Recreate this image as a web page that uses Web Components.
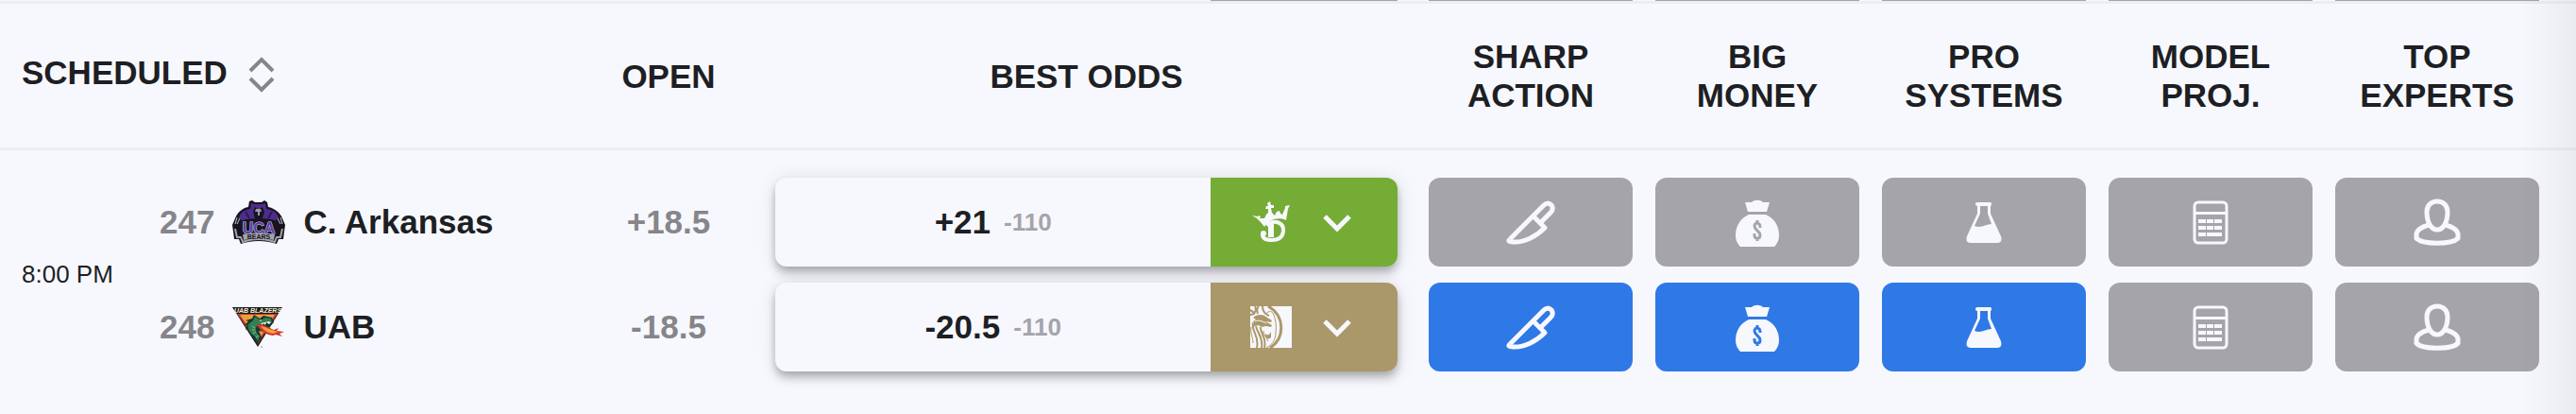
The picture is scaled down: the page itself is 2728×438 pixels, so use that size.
<!DOCTYPE html>
<html lang="en">
<head>
<meta charset="utf-8">
<meta name="viewport" content="width=device-width, initial-scale=1">
<title>Odds</title>
<style>
    body {
        margin: 0;
        background-color: #f7f8fd;
        color: #1d1f24;
        font-family: "Liberation Sans", Arial, sans-serif;
        font-size: 35px;
    }
</style>
</head>
<body>
<odds-board></odds-board>

<script>
const TEAM_LOGOS = {
    uca: `
        <svg viewBox="0 0 58 48" role="img" aria-label="UCA Bears">
            <path fill="#17141f" d="M19 2 22 1 25 3H32L35 1 38 3 39 8C45 9 52 14 54 20L57 27 56 34 55 42 50 42 48 47C36 43 22 43 10 47L8 42 3 42 2 34 1 27 4 20C6 14 12 9 18 8Z"/>
            <path fill="#4d2d8c" d="M21 4 25 5H32L36 4 37 10C43 11 48 13 50 19L46 23H12L8 19C10 13 15 11 20 10Z"/>
            <path fill="#17141f" d="M25 8 28 10H30L33 8 35 13 33 20H25L23 13Z"/>
            <path fill="#9a9ba3" d="M26 10H31L32 13H30V17H28V13H25Z"/>
            <path fill="none" stroke="#2c1b56" stroke-width="2" d="M15 13 19 20M43 13 39 20"/>
            <path fill="none" stroke="#c9c9d2" stroke-width="1" d="M6 19 4 26M9 20 6 26M12 22 9 26M52 19 54 26M49 20 52 26M46 22 49 26"/>
            <path fill="#17141f" d="M8 23C20 19 38 19 50 23L49 40H9Z"/>
            <text x="29" y="36" text-anchor="middle" font-family="Liberation Sans, Arial, sans-serif" font-size="16" font-weight="700" fill="#5d3fa8" stroke="#d9d6e8" stroke-width="1" paint-order="stroke">UCA</text>
            <path fill="none" stroke="#a3a4ab" stroke-width="2" d="M4 31 6 40 10 40 12 45C22 41 36 41 46 45L48 40 52 40 54 31"/>
            <path fill="#a3a4ab" d="M12 37C22 35 36 35 46 37L45 43C35 41 23 41 13 43Z"/>
            <text x="29" y="42" text-anchor="middle" font-family="Liberation Sans, Arial, sans-serif" font-size="7" font-weight="700" fill="#17141f">BEARS</text>
        </svg>`,
    uab: `
        <svg viewBox="0 0 58 48" role="img" aria-label="UAB Blazers">
            <path fill="#1d1a1c" d="M1 3H54L28 45Z"/>
            <path fill="#b83a32" d="M6 10H49L28 42Z"/>
            <path fill="#e9a03a" d="M9 11H46L28 39Z"/>
            <text x="28" y="9" text-anchor="middle" font-family="Liberation Sans, Arial, sans-serif" font-size="7" font-weight="700" font-style="italic" fill="#f4ead0">UAB BLAZERS</text>
            <path fill="#17352b" d="M24 11 22 15 15 17 18 18 14 22 17 22 15 27 18 26C19 32 24 36 27 42L32 35 29 28 35 29 40 24 45 19 43 14 34 12 30 15Z"/>
            <path fill="#2f8059" d="M25 13 23 17 18 21C17 26 20 31 25 34L28 39 30 34C26 30 25 26 27 23L34 20 43 19 42 15 36 14 31 17Z"/>
            <path fill="none" stroke="#8fbf6a" stroke-width="1" d="M22 23 25 25M22 27 25 27M23 31 26 29M26 35 29 33"/>
            <path fill="#f6efe0" d="M31 20 33 22 34 20 36 22 37 19 40 21 42 19 40 18Z"/>
            <circle cx="31" cy="17" r="1" fill="#e7c23c"/>
            <path fill="#d4362c" d="M27 21C34 21 39 24 45 27L50 25 48 28 56 29 51 31 54 34 47 32 44 33C36 32 30 28 27 21Z"/>
            <path fill="#f3a23e" d="M31 23C37 24 41 27 50 29L44 31C38 30 34 27 31 23Z"/>
            <circle cx="32" cy="45" r="1" fill="#b4b4b8"/>
        </svg>`
};

const BOOK_LOGOS = {
    draftkings: `
        <svg viewBox="0 0 44 44" aria-hidden="true">
            <path fill="currentColor" d="M2 15 8 16 9 15 11 16 10 18 15 18 17 14 19 12 19 8 16 8 17 5 19 5 18 2 21 0 22 4 25 4 25 7 22 7 23 12 26 15 28 11 31 10 32 13 34 14 37 7 37 5 42 4 40 8 38 20C30 16 20 19 15 27L11 22 7 18Z"/>
            <path fill="none" stroke="currentColor" stroke-width="4" d="M17 25C26 19 36 22 35 32C34 39 29 41 23 41C17 41 13 39 13 35"/>
            <circle cx="14" cy="34" r="3" fill="currentColor"/>
            <path fill="currentColor" d="M19 23H25V38H19Z"/>
        </svg>`,
    betmgm: `
        <svg viewBox="0 0 44 44" aria-hidden="true">
            <path fill="currentColor" d="M0 0H44V44H0Z"/>
            <g fill="none" stroke="#ab986a">
                <path stroke-width="3" d="M19 0C37 10 37 34 21 44"/>
                <path stroke-width="2" d="M13 0C13 5 15 8 20 10M0 9C5 9 7 4 5 0M0 4C2 5 4 7 4 9M8 8C7 5 7 2 9 0"/>
                <path stroke-width="1" d="M16 9C20 3 24 6 25 9C27 15 28 21 27 28C27 36 23 41 17 44"/>
                <path stroke-width="2" d="M3 18C1 27 10 31 7 44M6 21C7 28 14 32 12 44M11 22C10 28 18 33 15 44"/>
                <path stroke-width="1" d="M1 22C0 30 3 32 3 39M14 26C14 30 17 33 19 37"/>
            </g>
            <path fill="#ab986a" d="M3 12C7 8 14 8 18 12L23 15 22 17 16 16 23 20 22 22 17 21 12 22C9 19 5 20 1 23L4 17 1 18 6 14Z"/>
            <path fill="#ab986a" d="M16 29C19 32 21 29 22 27V33C19 36 16 34 16 29Z"/>
            <path fill="none" stroke="currentColor" stroke-width="1" d="M5 16C9 14 13 16 17 18"/>
        </svg>`
};

const SIGNAL_ICONS = {
    knife: `
        <g fill="none" stroke="currentColor" stroke-width="5" stroke-linejoin="round">
            <path d="M6 46 42 10C44 8 47 7 50 10C52 13 51 16 49 18L39 28"/>
            <path d="M31 22 43 34C34 43 21 50 9 49C5 49 4 48 6 46"/>
        </g>`,
    money: `
        <path fill="currentColor" d="M15 7H22C25 4 31 4 34 7H41L38 17H18Z"/>
        <path fill="currentColor" d="M19 20H37C46 24 51 32 51 42C51 47 49 51 46 54H10C7 51 5 47 5 42C5 32 10 24 19 20Z"/>
        <path fill="none" stroke="var(--tile-color)" stroke-width="3" d="M31 34V33C31 28 25 28 25 32C25 37 31 37 31 42C31 46 25 46 25 42V40M28 26V30M28 44V48"/>`,
    flask: `
        <path fill="currentColor" fill-rule="evenodd" d="M21 7H35Q36 7 36 9T35 11V19L46 43Q48 50 42 50H14Q8 50 10 43L21 19V11Q19 11 19 9T21 7ZM24 11V19L18 32C25 35 30 30 36 30L32 19V11Z"/>`,
    model: `
        <rect x="11" y="7" width="34" height="43" rx="4" fill="none" stroke="currentColor" stroke-width="3"/>
        <path fill="currentColor" d="M11 17H45V20H11ZM15 25H23V29H15ZM24 25H31V29H24ZM32 25H40V29H32ZM15 32H23V36H15ZM24 32H31V36H24ZM32 32H40V36H32ZM15 39H23V43H15ZM24 39H40V43H24Z"/>`,
    expert: `
        <g fill="none" stroke="currentColor" stroke-width="5">
            <path d="M28 6C34 6 39 10 39 17C39 27 35 36 28 36C21 36 17 27 17 17C17 10 22 6 28 6Z"/>
            <path d="M19 31C11 33 6 37 6 41V45C12 52 44 52 50 45V41C50 37 45 33 37 31"/>
        </g>`
};

const SIGNALS = [
    { icon: "knife", title: ["Sharp", "Action"] },
    { icon: "money", title: ["Big", "Money"] },
    { icon: "flask", title: ["Pro", "Systems"] },
    { icon: "model", title: ["Model", "Proj."] },
    { icon: "expert", title: ["Top", "Experts"] }
];

const GAME = {
    time: "8:00 PM",
    teams: [
        { rotation: 247, logo: "uca", name: "C. Arkansas", open: "+18.5", line: "+21", price: "-110", book: "draftkings", active: [] },
        { rotation: 248, logo: "uab", name: "UAB", open: "-18.5", line: "-20.5", price: "-110", book: "betmgm", active: ["knife", "money", "flask"] }
    ]
};

class SortButton extends HTMLElement {

    constructor() {
        super();
        this.shadowDOM = this.attachShadow({ mode: "open" });
    }

    connectedCallback() {
        this.shadowDOM.innerHTML = `
            <style>
                :host {
                    display: block;
                }

                button {
                    display: flex;
                    align-items: center;
                    gap: 22px;
                    padding: 0;
                    border: 0;
                    background: none;
                    color: inherit;
                    font: inherit;
                    text-transform: inherit;
                    cursor: pointer;
                }

                svg {
                    width: 28px;
                    height: 40px;
                    margin-top: 6px;
                    color: #86858a;
                }
            </style>

            <button type="button">
                <slot></slot>
                <svg viewBox="0 0 28 40" aria-hidden="true">
                    <path fill="none" stroke="currentColor" stroke-width="4" d="M2 16 14 4 26 16M2 24 14 36 26 24"/>
                </svg>
            </button>
        `;
    }
}

class TeamLabel extends HTMLElement {

    constructor() {
        super();
        this.shadowDOM = this.attachShadow({ mode: "open" });
    }

    connectedCallback() {
        this.shadowDOM.innerHTML = `
            <style>
                :host {
                    display: flex;
                    align-items: center;
                    gap: 18px;
                    font-weight: 700;
                }

                .rotation {
                    color: #86858a;
                }

                svg {
                    display: block;
                    width: 58px;
                    height: 48px;
                }
            </style>

            <span class="rotation">${this.getAttribute("rotation")}</span>
            ${TEAM_LOGOS[this.getAttribute("logo")]}
            <span><slot></slot></span>
        `;
    }
}

class BestOdds extends HTMLElement {

    constructor() {
        super();
        this.shadowDOM = this.attachShadow({ mode: "open" });
    }

    connectedCallback() {
        const book = this.getAttribute("book");

        this.shadowDOM.innerHTML = `
            <style>
                :host {
                    display: flex;
                    height: 94px;
                    border-radius: 12px;
                    overflow: hidden;
                    background-color: #f7f8fd;
                    box-shadow: 0 4px 8px -2px rgba(0, 0, 0, 0.2), 0 8px 10px rgba(0, 0, 0, 0.14), 0 2px 20px rgba(0, 0, 0, 0.12);
                }

                .odds {
                    flex: 1;
                    display: flex;
                    align-items: center;
                    justify-content: center;
                    gap: 14px;
                    font-weight: 700;
                }

                .price {
                    color: #a5a4a9;
                    font-size: 26px;
                }

                button {
                    flex: 0 0 30%;
                    display: flex;
                    align-items: center;
                    justify-content: center;
                    gap: 30px;
                    padding: 0 4px 0 0;
                    border: 0;
                    color: #f7f8fd;
                    cursor: pointer;
                }

                .draftkings {
                    background-color: #74ac36;
                }

                .betmgm {
                    background-color: #ab986a;
                }

                svg {
                    width: 44px;
                    height: 44px;
                }

                .arrow {
                    width: 36px;
                    height: 36px;
                }
            </style>

            <div class="odds">
                <span>${this.getAttribute("line")}</span>
                <span class="price">${this.getAttribute("price")}</span>
            </div>
            <button type="button" class="${book}" aria-label="Choose sportsbook">
                ${BOOK_LOGOS[book]}
                <svg class="arrow" viewBox="0 0 36 36" aria-hidden="true">
                    <path fill="none" stroke="currentColor" stroke-width="5" d="M5 12 18 25 31 12"/>
                </svg>
            </button>
        `;
    }
}

class SignalTile extends HTMLElement {

    constructor() {
        super();
        this.shadowDOM = this.attachShadow({ mode: "open" });
    }

    connectedCallback() {
        this.shadowDOM.innerHTML = `
            <style>
                :host {
                    --tile-color: #a5a4a9;
                    display: block;
                }

                :host([active]) {
                    --tile-color: #2f79e7;
                }

                button {
                    display: flex;
                    align-items: center;
                    justify-content: center;
                    width: 100%;
                    height: 94px;
                    padding: 0;
                    border: 0;
                    border-radius: 12px;
                    background-color: var(--tile-color);
                    color: #f7f8fd;
                    cursor: pointer;
                }

                svg {
                    width: 56px;
                    height: 56px;
                }
            </style>

            <button type="button" aria-label="${this.getAttribute("label")}">
                <svg viewBox="0 0 56 56" aria-hidden="true">${SIGNAL_ICONS[this.getAttribute("icon")]}</svg>
            </button>
        `;
    }
}

class OddsBoard extends HTMLElement {

    constructor() {
        super();
        this.shadowDOM = this.attachShadow({ mode: "open" });
    }

    connectedCallback() {
        this.render();
    }

    renderTeam(team, index) {
        const time = index === 0 ? `<td class="time" rowspan="2">${GAME.time}</td>` : "";
        const tiles = SIGNALS.map(({ icon, title }) => `
            <td class="tile">
                <signal-tile icon="${icon}" label="${title.join(" ")}" ${team.active.includes(icon) ? "active" : ""}></signal-tile>
            </td>
        `).join("");

        return `
            <tr>
                ${time}
                <td><team-label rotation="${team.rotation}" logo="${team.logo}">${team.name}</team-label></td>
                <td class="open">${team.open}</td>
                <td class="best"><best-odds line="${team.line}" price="${team.price}" book="${team.book}"></best-odds></td>
                ${tiles}
            </tr>
        `;
    }

    render() {
        this.shadowDOM.innerHTML = `
            <style>
                :host {
                    display: block;
                    position: relative;
                    min-height: 100vh;
                }

                /* fade at the edge of the scroll area */
                :host::after {
                    content: "";
                    position: absolute;
                    top: 0;
                    right: 0;
                    bottom: 0;
                    width: 60px;
                    background: linear-gradient(to right, rgba(0, 0, 0, 0), rgba(0, 0, 0, 0.05));
                    pointer-events: none;
                }

                table {
                    width: 100%;
                    table-layout: fixed;
                    border-spacing: 0;
                }

                .col-time { width: 169px; }
                .col-team { width: 447px; }
                .col-open { width: 184px; }
                .col-tile { width: 240px; }
                .col-end { width: 27px; }

                th,
                td {
                    padding: 0;
                }

                th {
                    height: 152px;
                    border-top: 3px solid #ecedf2;
                    border-bottom: 3px solid #ecedf2;
                    line-height: 41px;
                    text-transform: uppercase;
                }

                .scheduled {
                    padding-left: 23px;
                }

                .scheduled sort-button {
                    margin-bottom: 8px;
                }

                .previous td {
                    height: 1px;
                }

                .previous div {
                    height: 1px;
                    background-color: #a5a4a9;
                }

                .previous .best div {
                    margin-left: 70%;
                }

                tbody td {
                    padding-top: 17px;
                }

                tbody tr:first-child td {
                    padding-top: 29px;
                }

                .best {
                    padding-left: 21px;
                    padding-right: 21px;
                }

                .tile {
                    padding-left: 12px;
                    padding-right: 12px;
                }

                .time {
                    padding-left: 23px;
                    font-size: 26px;
                    white-space: nowrap;
                }

                .open {
                    color: #86858a;
                    font-weight: 700;
                    text-align: center;
                }
            </style>

            <table>
                <colgroup>
                    <col class="col-time">
                    <col class="col-team">
                    <col class="col-open">
                    <col>
                    ${SIGNALS.map(() => `<col class="col-tile">`).join("")}
                    <col class="col-end">
                </colgroup>
                <thead>
                    <tr class="previous" aria-hidden="true">
                        <td colspan="3"></td>
                        <td class="best"><div></div></td>
                        ${SIGNALS.map(() => `<td class="tile"><div></div></td>`).join("")}
                        <td></td>
                    </tr>
                    <tr>
                        <th class="scheduled" colspan="2" scope="col"><sort-button>Scheduled</sort-button></th>
                        <th scope="col">Open</th>
                        <th scope="col">Best Odds</th>
                        ${SIGNALS.map(({ title }) => `<th scope="col">${title.join("<br>")}</th>`).join("")}
                        <th></th>
                    </tr>
                </thead>
                <tbody>
                    ${GAME.teams.map((team, index) => this.renderTeam(team, index)).join("")}
                </tbody>
            </table>
        `;
    }
}

customElements.define("sort-button", SortButton);
customElements.define("team-label", TeamLabel);
customElements.define("best-odds", BestOdds);
customElements.define("signal-tile", SignalTile);
customElements.define("odds-board", OddsBoard);
</script>
</body>
</html>
